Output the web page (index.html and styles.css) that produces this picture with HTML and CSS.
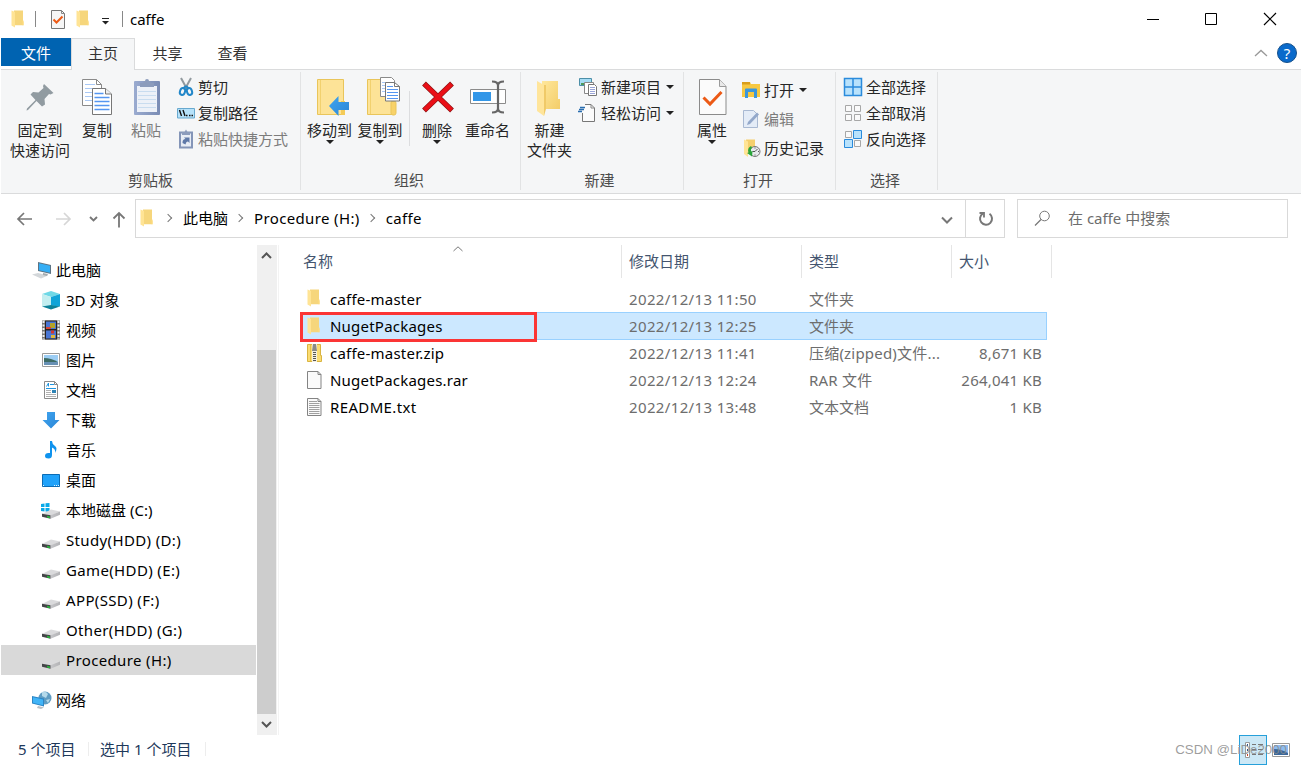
FILE: index.html
```html
<!DOCTYPE html>
<html lang="zh-CN">
<head>
    <meta charset="UTF-8">
    <title>caffe</title>
    <link rel="stylesheet" href="styles.css">
</head>
<body>
<!-- shared icons -->
<svg class="defs" width="0" height="0">
    <defs>
        <linearGradient id="gFolder" x1="0" x2="1" y1="0" y2="1"><stop offset="0" stop-color="#ffe79b"/><stop offset="1" stop-color="#f3cd69"/></linearGradient>
        <linearGradient id="gDrive" x1="0" x2="1"><stop offset="0" stop-color="#c6c6c9"/><stop offset="1" stop-color="#b3b3b6"/></linearGradient>
        <linearGradient id="gClip" x1="0" x2="1"><stop offset="0" stop-color="#9aabd0"/><stop offset="1" stop-color="#7a8cb4"/></linearGradient>
        <linearGradient id="gBlue" x1="0" x2="1" y1="0" y2="1"><stop offset="0" stop-color="#3fa4ef"/><stop offset="1" stop-color="#2b86d6"/></linearGradient>
    </defs>
    <symbol id="folder" viewBox="0 0 14 18">
        <path d="M3 0.500h9v11h.5v3.800H3z" fill="#f6d67c"/>
        <path d="M0.500 0.500L4 2v15.500l-3.500-2z" fill="#ffe495"/>
        <path d="M11.500 10.500h1v4.800h-1z" fill="#ffdc7c"/>
    </symbol>
    <symbol id="drive" viewBox="0 0 18 10">
        <path d="M0 5L9 0.500 18 2.500 9 6.500z" fill="#dadadc"/>
        <path d="M8.500 6.300L18 2.500v3.300L8.500 9.800z" fill="url(#gDrive)"/>
        <path d="M0 4.800l8.500 1.500v3.500L0 7.800z" fill="#434547"/>
        <path d="M5 6.800l3 .6v1.800l-3-.7z" fill="#28b43c"/>
    </symbol>
    <symbol id="check" viewBox="0 0 30 38">
        <path d="M1.500 1.500h20l6.500 7v28h-26.500z" fill="#fbfbfb" stroke="#8b8b8b"/>
        <path d="M21.500 1.500v7h6.500" fill="#e9e9e9" stroke="#9b9b9b"/>
        <path d="M5.500 19.500l6.500 6.500 11.500-12" fill="none" stroke="#ec5a16" stroke-width="3"/>
    </symbol>
</svg>

<div class="window">
    <!-- title bar -->
    <div class="titlebar">
        <svg class="tb-folder" width="14" height="18"><use href="#folder"/></svg>
        <i class="tb-line"></i>
        <svg class="tb-check" width="16" height="19" viewBox="0 0 16 19"><path d="M1.500.5h10l3 3v15h-13z" fill="#f6f6f6" stroke="#777"/><path d="M11.500.5v3h3" fill="none" stroke="#888"/><path d="M3.500 9.500l3 3 6-6" fill="none" stroke="#ec5a16" stroke-width="2"/></svg>
        <svg class="tb-folder2" width="14" height="18"><use href="#folder"/></svg>
        <svg class="tb-more" width="7" height="7"><path d="M0 .5h7" stroke="#222"/><path d="M0 3h7L3.500 6.500z" fill="#222"/></svg>
        <i class="tb-line tb-line2"></i>
        <span class="tb-title">caffe</span>
        <svg class="tb-btns" width="131" height="14"><path d="M1 7.500h12" stroke="#000"/><path d="M59.500 1.500h11v11h-11z" fill="none" stroke="#000"/><path d="M118 1l12 12M130 1l-12 12" stroke="#000" stroke-width="1.200"/></svg>
    </div>

    <!-- tabs -->
    <div class="tabs">
        <div class="tab tab-file">文件</div>
        <div class="tab tab-active">主页</div>
        <div class="tab">共享</div>
        <div class="tab">查看</div>
        <svg class="tabs-up" width="14" height="8"><path d="M1 7l6-5.500L13 7" fill="none" stroke="#999" stroke-width="1.300"/></svg>
        <span class="help">?</span>
    </div>

    <!-- ribbon -->
    <div class="ribbon">
        <div class="group g-clip">
            <div class="group-body">
                <div class="big w78">
                    <svg width="40" height="40"><path d="M24 7l9.500 9-3 1.500-1.500-.5-4.500 5 .5 5.500-3 2-5.500-5.500-8.500 9-1.500.5.500-2 8.500-8.500-5-5.500 2.500-2.500 5.500.5 5-4.500-.5-2z" fill="#919ba1"/></svg>
                    <span>固定到<br>快速访问</span>
                </div>
                <div class="big w36">
                    <svg width="40" height="40" fill="none"><path d="M5.500 2.500h14l5 5v21h-19z" fill="#fff" stroke="#8a8a8a"/><path d="M19.500 2.500v5h5" stroke="#8a8a8a"/><path d="M8 7.500h10M8 11.500h14M8 15.500h10M8 19.500h10M8 23.500h10" stroke="#a9c8f5"/><path d="M15.500 11.500h13l6 5.500v20.500h-19z" fill="#fff" stroke="#777"/><path d="M28.500 11.500V17h6" fill="#eee" stroke="#777"/><path d="M17.500 16.500h9M17.500 20.500h15M17.500 24.500h15M17.500 28.500h15M17.500 32.500h15" stroke="#5596f1" stroke-width="1.300"/></svg>
                    <span>复制</span>
                </div>
                <div class="big w62 off">
                    <svg width="40" height="40"><rect x="8" y="4" width="26" height="34" rx="1" fill="url(#gClip)"/><path d="M11 9h20v26H11z" fill="#edf1f8"/><path d="M12 14.500h18M12 18.500h18M12 22.500h18M12 26.500h18M12 30.500h18" stroke="#c9dcef"/><path d="M14 6h3q1-2 2-2a2 2 0 0 1 4 0q1 0 2 2h3v4H14z" fill="#8c9cbc"/></svg>
                    <span>粘贴</span>
                </div>
                <div class="list">
                    <div class="small">
                        <svg width="18" height="20"><path d="M4 1l6 11M14 1L8 12" stroke="#929a9f" stroke-width="2"/><path d="M9 9l-3 2.500M9 9l3 2.500" stroke="#2287c9" stroke-width="2"/><ellipse cx="5.500" cy="14.500" rx="2.500" ry="3.500" fill="none" stroke="#2287c9" stroke-width="2" transform="rotate(20 5.500 14.500)"/><ellipse cx="12.500" cy="14.500" rx="2.500" ry="3.500" fill="none" stroke="#2287c9" stroke-width="2" transform="rotate(-20 12.500 14.500)"/></svg>
                        <span>剪切</span>
                    </div>
                    <div class="small">
                        <svg width="18" height="20"><path d="M.5 5.500h17v9.500H.5z" fill="#b6e2fa" stroke="#68a9cf"/><path d="M2.500 7l2 6M6 7l2 6M9 12.500h1.500M12 12.500h1.500M14.500 12.500H16" stroke="#111" stroke-width="1.400"/></svg>
                        <span>复制路径</span>
                    </div>
                    <div class="small off">
                        <svg width="18" height="20"><path d="M3 3.500h12v15H3z" fill="#e8edf5" stroke="#8495b8" stroke-width="2"/><path d="M5 3h2.500L9 .5 10.500 3H13v3H5z" fill="#8c9cbc"/><path d="M5.500 14c0-3 1-4 3-4L7 8.500h5.500V14L11 12.500c-1.500 0-2 1-2.500 3z" fill="#5f79a8"/></svg>
                        <span>粘贴快捷方式</span>
                    </div>
                </div>
            </div>
            <div class="group-name">剪贴板</div>
        </div>

        <div class="group g-org">
            <div class="group-body">
                <div class="big w51">
                    <svg width="40" height="40"><path d="M7.500 2.500h26v35h-26z" fill="#fde397" stroke="#e9c55a"/><path d="M10.500 3v34" stroke="#f2d16f"/><path d="M31 24h4v14h-4z" fill="#f4cb58"/><path d="M19 29l9.500-10v6h10.500v8h-10.500v6z" fill="url(#gBlue)"/></svg>
                    <span>移动到</span><b class="arr"></b>
                </div>
                <div class="big w50">
                    <svg width="40" height="40" fill="none"><path d="M7.500 2.500h25v35h-25z" fill="#fde397" stroke="#e9c55a"/><path d="M10.500 3v34" stroke="#f2d16f"/><rect x="31" y="24" width="5" height="14" rx="2" fill="#f8d269" stroke="#e9c55a"/><path d="M20.500.5h11l3 3v16h-14z" fill="#fff" stroke="#8a8a8a"/><path d="M22 5.500h6M22 8.500h6M22 11.500h6M22 14.500h6" stroke="#a9c8f5"/><path d="M25.500 5.500h9l5 4v14.500h-14z" fill="#fff" stroke="#777"/><path d="M34.500 5.500v4h5" stroke="#777"/><path d="M27 9.500h6M27 12.500h11M27 15.500h11M27 18.500h11M27 21.500h11" stroke="#5596f1"/></svg>
                    <span>复制到</span><b class="arr"></b>
                </div>
                <i class="mid-line"></i>
                <div class="big w54">
                    <svg width="40" height="40"><path d="M7 6.500l28 27M35 6.500l-28 27" stroke="#8e1515" stroke-width="5.500"/><path d="M7.500 7l27 26M34.500 7l-27 26" stroke="#ea0f17" stroke-width="4.200"/></svg>
                    <span>删除</span><b class="arr"></b>
                </div>
                <div class="big w47">
                    <svg width="40" height="40" fill="none"><path d="M2.500 12.500h35v14h-35z" fill="#fff" stroke="#8b8b8b"/><path d="M5 15h18v9H5z" fill="#3397e8"/><path d="M24 4.500q6 0 6 4v23q0 4-6 4M36 4.500q-6 0-6 4v23q0 4 6 4" stroke="#666" stroke-width="2.200"/></svg>
                    <span>重命名</span>
                </div>
            </div>
            <div class="group-name">组织</div>
        </div>

        <div class="group g-new">
            <div class="group-body">
                <div class="big w57">
                    <svg width="40" height="40"><path d="M12 4h16v18h2v10H12z" fill="url(#gFolder)"/><path d="M7 4l7 4v31l-7-5z" fill="#ffe59b"/><path d="M14 8v31l2-7V8z" fill="#f0ca68"/></svg>
                    <span>新建<br>文件夹</span>
                </div>
                <div class="list">
                    <div class="small">
                        <svg width="20" height="20" fill="none"><path d="M1.500 1.500h12v7h-12z" fill="#a5dcf5" stroke="#4c8fa8"/><path d="M3 6h5v2H3z" fill="#4e9a5c"/><path d="M6.500 5.500h9v11h-9z" fill="#fff" stroke="#888"/><path d="M10.500 7.500h6l2 2v9h-8z" fill="#fff" stroke="#777"/><path d="M12 10.500h5M12 12.500h5M12 14.500h5M12 16.500h5" stroke="#9aa5d8"/></svg>
                        <span>新建项目</span><b class="arr"></b>
                    </div>
                    <div class="small">
                        <svg width="20" height="20" fill="none"><path d="M4.500 1.500h9l3 3v14h-12z" fill="#fbfbfb"/><path d="M7 1.500h6l3.500 3.500v13.500h-12V10" stroke="#777"/><path d="M13 1.500V5h3.500" stroke="#888"/><path d="M2 4.500h5M1 6.500h5M0 8.500h4" stroke="#2a6eb0" stroke-width="1.300"/></svg>
                        <span>轻松访问</span><b class="arr"></b>
                    </div>
                </div>
            </div>
            <div class="group-name">新建</div>
        </div>

        <div class="group g-open">
            <div class="group-body">
                <div class="big w56">
                    <svg width="40" height="40"><use href="#check" x="6" y="1" width="30" height="38"/></svg>
                    <span>属性</span><b class="arr"></b>
                </div>
                <div class="list list-wide">
                    <div class="small">
                        <svg width="20" height="20"><path d="M1 2h8l1 2h9v13H1z" fill="#f7c841"/><path d="M1 2h8v2.500H1z" fill="#d99e1c"/><path d="M4 9.500q0-1 1-1h10q1 0 1 1V18h-3v-6H7v6H4z" fill="#3c97dc"/></svg>
                        <span>打开</span><b class="arr"></b>
                    </div>
                    <div class="small off">
                        <svg width="20" height="20"><path d="M2.500 1.500h10l4 4v13h-14z" fill="#e4ecf7" stroke="#a9b9d2"/><path d="M6 16l1-3L16 3.500l2 2L9 15z" fill="#93a8ca"/></svg>
                        <span>编辑</span>
                    </div>
                    <div class="small">
                        <svg width="20" height="20"><path d="M5 1.500h9v14H5z" fill="#f4cf6c"/><path d="M3 1.500l4 2V19l-4-3z" fill="#ffe495"/><circle cx="14" cy="13.500" r="5" fill="#e6e9ec" stroke="#777"/><path d="M14 13.500l2.500-2.500M14 13.500h-2.500M14 9.500v1M14 16.500v1M17 13.500h1" stroke="#555"/><path d="M10 8q-4 2-2.500 6.500l-1.500.5 5 3.500.5-5.500-1.500.5q-.5-3 1-4z" fill="#29a53a"/></svg>
                        <span>历史记录</span>
                    </div>
                </div>
            </div>
            <div class="group-name">打开</div>
        </div>

        <div class="group g-select">
            <div class="group-body">
                <div class="list">
                    <div class="small">
                        <svg width="20" height="20"><path d="M1.500 1.500h17v17h-17zM10 1.500v17M1.500 10h17" fill="#b8e2fc" stroke="#2a8bdc" stroke-width="1.500"/></svg>
                        <span>全部选择</span>
                    </div>
                    <div class="small">
                        <svg width="20" height="20"><path d="M2.500 2.500h6v6h-6zM11.500 2.500h6v6h-6zM2.500 11.500h6v6h-6zM11.500 11.500h6v6h-6z" fill="#fafafa" stroke="#a7a7a7"/></svg>
                        <span>全部取消</span>
                    </div>
                    <div class="small">
                        <svg width="20" height="20"><path d="M2.500 2.500h6v6h-6zM11.500 11.500h6v6h-6z" fill="#fafafa" stroke="#a7a7a7"/><path d="M10.500 1.500h8v8h-8zM1.500 10.500h8v8h-8z" fill="#b8e2fc" stroke="#2a8bdc"/></svg>
                        <span>反向选择</span>
                    </div>
                </div>
            </div>
            <div class="group-name">选择</div>
        </div>
    </div>

    <!-- address bar -->
    <div class="address">
        <svg class="nav-arrows" width="114" height="20" fill="none">
            <path d="M8 3L2 9l6 6M2 9h14" stroke="#777" stroke-width="1.700"/>
            <path d="M48 3l6 6-6 6M54 9H40" stroke="#d6d6d6" stroke-width="1.700"/>
            <path d="M74 7l3.500 3.500L81 7" stroke="#777" stroke-width="1.900"/>
            <path d="M97.500 8.500L103 3l5.500 5.500M103 3.500v14" stroke="#777" stroke-width="1.800"/>
        </svg>
        <div class="path">
            <svg class="path-folder" width="14" height="18"><use href="#folder"/></svg>
            <i class="chev"></i><span>此电脑</span>
            <i class="chev"></i><span class="lat">Procedure (H:)</span>
            <i class="chev"></i><span class="lat">caffe</span>
            <svg class="path-down" width="12" height="8"><path d="M1 1.500l5 5 5-5" fill="none" stroke="#777" stroke-width="2"/></svg>
            <div class="refresh"><svg width="16" height="16" fill="none"><path d="M11.500 2.800A6 6 0 1 1 5 2.500" stroke="#777" stroke-width="2"/><path d="M1.500 2h4.500v4.500" stroke="#777" stroke-width="1.800"/></svg></div>
        </div>
        <div class="search">
            <svg width="17" height="17" fill="none"><circle cx="10.500" cy="6" r="4.800" stroke="#777"/><path d="M7 9.500L1 15.500" stroke="#777" stroke-width="1.300"/></svg>
            <span>在 caffe 中搜索</span>
        </div>
    </div>

    <div class="main">
        <!-- navigation tree -->
        <div class="tree">
            <div class="node top">
                <svg width="20" height="20"><path d="M6 2l13 3v9L6 11z" fill="#5c7384"/><path d="M7 3.200l11 2.500v7L7 10.200z" fill="#35aef5"/><path d="M0 14.500l6-1.500 10 2.500-7 3z" fill="#d3d7da"/><path d="M11 13l5 1-1 2-4-1z" fill="#a6acb0"/></svg>
                <span>此电脑</span>
            </div>
            <div class="node">
                <svg width="20" height="20"><path d="M1 4l9-3 9 3-9 3z" fill="#6fd8e6"/><path d="M1 4l9 3v8.500l-9 1z" fill="#c3eef0"/><path d="M10 7l9-3v12.500l-9-1z" fill="#10a4d8"/><path d="M1 16.500L10 15l9 1.500-9 3z" fill="#0d8299"/></svg>
                <span>3D 对象</span>
            </div>
            <div class="node">
                <svg width="20" height="20"><path d="M1 .5h18v19H1z" fill="#777"/><path d="M4 .5h12v19H4z" fill="#28231f"/><path d="M5 1.500h10v7.500H5zM5 10.500h10v8H5z" fill="#4976d4"/><path d="M9 3h5v5H9z" fill="#b4a329"/><path d="M5 7h5v2H5z" fill="#da4437"/><path d="M10 10.500h3v3h-3z" fill="#d6362c"/><path d="M10 15h4v3h-4z" fill="#e0b73a"/><path d="M2.500 1v18M17.500 1v18" stroke="#eee" stroke-width="2" stroke-dasharray="2 1.500"/></svg>
                <span>视频</span>
            </div>
            <div class="node">
                <svg width="20" height="20"><path d="M1.500 3.500h17v13h-17z" fill="#fff" stroke="#9b9b9b"/><path d="M3 5h14v10H3z" fill="#9ccdf4"/><path d="M3 8q7 0 14 4v1H3z" fill="#3d6b64"/><path d="M3 12h14v3H3z" fill="#6790b4"/></svg>
                <span>图片</span>
            </div>
            <div class="node">
                <svg width="20" height="20" fill="none"><path d="M3.500 1.500h10l3 3v14h-13z" fill="#fff" stroke="#8a8a8a"/><path d="M13.500 1.500v3h3" stroke="#8a8a8a"/><path d="M5.500 6.500L7.500 3v3.500M9 4.500h4M5 8.500h10" stroke="#1e95e0"/><path d="M5 10.500h5M5 12.500h5M5 14.500h10M5 16.500h10" stroke="#b0b0b0"/><path d="M11 10h4v3h-4z" fill="#2e83b5"/></svg>
                <span>文档</span>
            </div>
            <div class="node">
                <svg width="20" height="20"><path d="M6 2h8v8h4.500L10 18.500 1.500 10H6z" fill="url(#gBlue)"/></svg>
                <span>下载</span>
            </div>
            <div class="node">
                <svg width="20" height="20"><path d="M9 1h2q0 3 3 5t0 7q1-4-3-5.500V15q0 3.500-3.500 3.500T4 16q0-3 3.500-3H9z" fill="#0f93ee"/></svg>
                <span>音乐</span>
            </div>
            <div class="node">
                <svg width="20" height="20"><path d="M1.500 4.500h17v12h-17z" fill="#20a2fa" stroke="#0b6cb5"/><path d="M2 15.500h2M13 15.500h5" stroke="#e5f4ff" stroke-dasharray="1 1"/></svg>
                <span>桌面</span>
            </div>
            <div class="node">
                <svg width="20" height="20"><path d="M0 4l3.500-.5V7H0zM4.500 3.300L8.500 3v4h-4zM0 8h3.500v3.500L0 11zM4.500 8h4v4l-4-.5z" fill="#08a9e8"/><use href="#drive" x="1" y="9" width="18" height="10"/></svg>
                <span>本地磁盘 (C:)</span>
            </div>
            <div class="node"><svg width="20" height="20"><use href="#drive" x="1" y="9" width="18" height="10"/></svg><span class="lat">Study(HDD) (D:)</span></div>
            <div class="node"><svg width="20" height="20"><use href="#drive" x="1" y="9" width="18" height="10"/></svg><span class="lat">Game(HDD) (E:)</span></div>
            <div class="node"><svg width="20" height="20"><use href="#drive" x="1" y="9" width="18" height="10"/></svg><span class="lat">APP(SSD) (F:)</span></div>
            <div class="node"><svg width="20" height="20"><use href="#drive" x="1" y="9" width="18" height="10"/></svg><span class="lat">Other(HDD) (G:)</span></div>
            <div class="node current"><svg width="20" height="20"><use href="#drive" x="1" y="9" width="18" height="10"/></svg><span class="lat">Procedure (H:)</span></div>
            <div class="node top network">
                <svg width="20" height="20"><circle cx="13" cy="8" r="6.500" fill="#5f9cc2"/><path d="M10 2q4-1 6 2l-2 4-4-2zM14 10l4-1-2 4z" fill="#b4d9ea"/><path d="M0 6l12 2.500v8L0 13.500z" fill="#2c86c6"/><path d="M1 7.200l10 2.200v5.800L1 12.800z" fill="#41b4f7"/><path d="M6 16l6 1.500-3 1.500-4-1z" fill="#b9bfc4"/></svg>
                <span>网络</span>
            </div>
        </div>
        <div class="scroll">
            <svg width="20" height="20"><path d="M5 13l4.500-4.500L14 13" fill="none" stroke="#555" stroke-width="2"/></svg>
            <i class="thumb"></i>
            <svg width="20" height="20"><path d="M5 7l4.500 4.500L14 7" fill="none" stroke="#555" stroke-width="2"/></svg>
        </div>

        <!-- file list -->
        <div class="files">
            <div class="head">
                <div>名称<svg class="sort" width="10" height="6"><path d="M.5 5L5 .8 9.500 5" fill="none" stroke="#777"/></svg></div>
                <div>修改日期</div>
                <div>类型</div>
                <div>大小</div>
            </div>
            <div class="row">
                <svg width="16" height="20"><use href="#folder" x="0" y="0" width="14" height="18"/></svg>
                <span class="name">caffe-master</span><span class="lat">2022/12/13 11:50</span><span>文件夹</span><span></span>
            </div>
            <div class="row selected">
                <svg width="16" height="20"><use href="#folder" x="0" y="1" width="14" height="18"/></svg>
                <span class="name">NugetPackages</span><span class="lat">2022/12/13 12:25</span><span>文件夹</span><span></span>
                <i class="mark"></i>
            </div>
            <div class="row">
                <svg width="16" height="20"><path d="M.5 1.500h13v11h1v6H.5z" fill="#fbdc72" stroke="#d9b441"/><path d="M3.500 2v16" stroke="#e3bf4c"/><path d="M5 1h5v18H5z" fill="#f4efe0"/><path d="M7.500 9v10" stroke="#555" stroke-width="3" stroke-dasharray="1 1"/><path d="M6 1h3l1 7H5z" fill="#8a8a8a"/></svg>
                <span class="name">caffe-master.zip</span><span class="lat">2022/12/13 11:41</span><span class="type">压缩(zipped)文件...</span><span class="size">8,671 KB</span>
            </div>
            <div class="row">
                <svg width="16" height="20"><path d="M.5 1.500h10.500l3 3v14H.5z" fill="#fafafa" stroke="#848484"/><path d="M11 1.500v3h3" fill="none" stroke="#848484"/></svg>
                <span class="name">NugetPackages.rar</span><span class="lat">2022/12/13 12:24</span><span class="type">RAR 文件</span><span class="size">264,041 KB</span>
            </div>
            <div class="row">
                <svg width="16" height="20"><path d="M.5 1.500h10.500l3 3v14H.5z" fill="#fafafa" stroke="#848484"/><path d="M11 1.500v3h3" fill="none" stroke="#848484"/><path d="M2 4.500h8M2 6.500h10.500M2 8.500h10.500M2 10.500h10.500M2 12.500h10.500M2 14.500h10.500M2 16.500h10.500" stroke="#a0a0a0"/></svg>
                <span class="name lat">README.txt</span><span class="lat">2022/12/13 13:48</span><span>文本文档</span><span class="size">1 KB</span>
            </div>
        </div>
    </div>

    <!-- status bar -->
    <div class="status">
        <span class="count">5 个项目</span>
        <span class="picked">选中 1 个项目</span>
        <div class="views">
            <span class="view-on"><svg width="20" height="18" fill="none"><path d="M1.500 1.500h4v15h-4z" fill="#fff" stroke="#999"/><path d="M3 4h1M3 9h1" stroke="#258" stroke-width="2"/><path d="M3 14h1" stroke="#c42" stroke-width="2"/><path d="M8 3.500h4M14 3.500h5M8 8.500h4M14 8.500h5M8 13.500h4M14 13.500h5" stroke="#777"/></svg></span>
            <svg class="view-pic" width="18" height="14"><path d="M.5.500h17v13H.5z" fill="#fff" stroke="#999"/><path d="M2 2h14v10H2z" fill="#8cbdf1"/><path d="M2 6q7 0 14 4v2H2z" fill="#3a679a"/></svg>
        </div>
        <span class="watermark">CSDN @LiDe2000</span>
    </div>
</div>
</body>
</html>
```
FILE: styles.css
```css
*{
    box-sizing: border-box;
}
body{
    margin: 0;
    background: #fff;
    font: 15px/20px "Noto Sans", "Noto Sans CJK SC", sans-serif;
    color: #000;
    overflow: hidden;
}
svg{
    display: block;
    flex: none;
}
.defs{
    position: absolute;
}
.lat{
    letter-spacing: 0.36px;
}
.window{
    width: 1301px;
    height: 765px;
    padding-left: 1px;
    display: flex;
    flex-direction: column;
}

/* title bar */
.titlebar{
    height: 38px;
    display: flex;
    align-items: center;
    padding-left: 10px;
    flex: none;
}
.tb-line{
    width: 1px;
    height: 16px;
    margin-left: 10px;
    background: #888;
}
.tb-check{
    margin-left: 14px;
}
.tb-folder2{
    margin-left: 10px;
}
.tb-more{
    margin: 4px 0 0 12px;
}
.tb-line2{
    margin-left: 13px;
}
.tb-title{
    margin-left: 7px;
}
.tb-btns{
    margin-left: auto;
    margin-right: 24px;
}

/* tabs */
.tabs{
    height: 32px;
    display: flex;
    flex: none;
    border-bottom: 1px solid #dadbdc;
    color: #333;
}
.tab{
    width: 65px;
    line-height: 30px;
    text-align: center;
}
.tab-file{
    width: 70px;
    height: 28px;
    background: #0063b1;
    color: #fff;
}
.tab-active{
    width: 64px;
    height: 32px;
    border: 1px solid #dadbdc;
    border-bottom: 0;
    line-height: 28px;
    background: #f5f6f7;
}
.tabs-up{
    margin: 11px 9px 0 auto;
}
.help{
    width: 20px;
    height: 20px;
    margin: 5px 4px 0 0;
    border: 1px solid #16518c;
    border-radius: 50%;
    background: #0a6acb;
    color: #fff;
    line-height: 18px;
    text-align: center;
}

/* ribbon */
.ribbon{
    height: 124px;
    display: flex;
    flex: none;
    background: #f5f6f7;
    border-bottom: 1px solid #dadbdc;
    color: #262626;
}
.group{
    height: 118px;
    margin-top: 2px;
    border-right: 1px solid #e2e3e4;
    display: flex;
    flex-direction: column;
}
.g-clip{
    width: 300px;
}
.g-org{
    width: 220px;
}
.g-new{
    width: 163px;
}
.g-open{
    width: 152px;
}
.g-select{
    width: 102px;
}
.group-body{
    height: 98px;
    display: flex;
}
.g-org .group-body{
    padding-left: 3px;
}
.g-select .group-body{
    padding-left: 7px;
}
.group-name{
    color: #4c4c4c;
    text-align: center;
}
.g-org .group-name,
.g-open .group-name,
.g-select .group-name{
    padding-right: 3px;
}
.g-new .group-name{
    padding-right: 5px;
}
.big{
    display: flex;
    flex-direction: column;
    align-items: center;
    padding-top: 5px;
    text-align: center;
    white-space: nowrap;
}
.big span{
    margin-top: 3px;
}
.w78{ width: 78px; }
.w36{ width: 36px; }
.w62{ width: 62px; }
.w51{ width: 51px; }
.w50{ width: 50px; }
.w54{ width: 54px; }
.w47{ width: 47px; }
.w57{ width: 57px; }
.w56{ width: 56px; }
.arr{
    width: 0;
    border: 4px solid transparent;
    border-top-color: #222;
    border-bottom: 0;
}
.mid-line{
    width: 1px;
    height: 55px;
    margin: 19px 0 0 4px;
    background: #dcdddf;
}
.off{
    color: #7c7c7c;
}
.list{
    padding-top: 2px;
}
.list-wide{
    padding: 3px 0 0 1px;
}
.small{
    height: 26px;
    display: flex;
    align-items: center;
    white-space: nowrap;
}
.list-wide .small{
    height: 29px;
}
.small span{
    margin-left: 3px;
}
.small .arr{
    margin-left: 5px;
}

/* address bar */
.address{
    display: flex;
    flex: none;
    margin-top: 5px;
    height: 39px;
}
.nav-arrows{
    margin: 11px 5px 0 15px;
}
.path{
    width: 870px;
    display: flex;
    align-items: center;
    border: 1px solid #d9d9d9;
    padding-left: 5px;
}
.path span{
    margin-top: -2px;
}
.chev{
    width: 6px;
    height: 6px;
    border: solid #777;
    border-width: 1.5px 1.5px 0 0;
    transform: rotate(45deg);
    margin: -2px 12px 0 8px;
}
.path-folder{
    margin: -1px 3px 0 -1px;
}
.path-down{
    margin: 2px 12px 0 auto;
}
.refresh{
    width: 39px;
    height: 37px;
    border-left: 1px solid #d9d9d9;
    padding-left: 2px;
    display: flex;
    align-items: center;
    justify-content: center;
}
.search{
    width: 271px;
    margin-left: 12px;
    border: 1px solid #d9d9d9;
    display: flex;
    align-items: center;
    padding-left: 16px;
    color: #6d6d6d;
}
.search span{
    margin: -2px 0 0 17px;
}

/* tree */
.main{
    display: flex;
    flex: none;
    height: 490px;
    margin-top: 7px;
}
.tree{
    width: 256px;
    padding-top: 10px;
}
.node{
    height: 30px;
    width: 255px;
    display: flex;
    align-items: center;
    padding-left: 40px;
}
.node span{
    margin-left: 5px;
}
.node.top{
    padding-left: 31px;
}
.node.top span{
    margin-left: 4px;
}
.current{
    background: #d9d9d9;
}
.network{
    margin-top: 10px;
}
.scroll{
    width: 20px;
    background: #f0f0f0;
    display: flex;
    flex-direction: column;
    justify-content: space-between;
}
.thumb{
    width: 19px;
    height: 364px;
    margin-top: 84px;
    background: #cdcdcd;
}

/* file list */
.files{
    margin-left: 1px;
    padding-left: 21px;
    border-left: 1px solid #f3f3f3;
}
.head{
    display: grid;
    grid-template-columns: 322px 180px 150px 100px;
    height: 33px;
    color: #44556f;
}
.head div{
    position: relative;
    border-right: 1px solid #e5e5e5;
    padding: 6px 0 0 7px;
}
.head div:first-child{
    padding-left: 3px;
}
.sort{
    position: absolute;
    left: 153px;
    top: 1px;
}
.row{
    position: relative;
    display: grid;
    grid-template-columns: 23px 299px 180px 150px 84px;
    align-items: center;
    width: 747px;
    height: 27px;
    padding-left: 7px;
    color: #6d6d6d;
}
.head + .row{
    margin-top: 7px;
}
.row .name{
    color: #000;
    letter-spacing: 0.22px;
}
.row .name.lat{
    letter-spacing: 0.36px;
}
.row .type{
    letter-spacing: 0.2px;
}
.row .size{
    text-align: right;
    padding-right: 1px;
    letter-spacing: 0.22px;
}
.selected{
    height: 28px;
    margin-bottom: -1px;
    padding-left: 6px;
    background: #cce8ff;
    border: 1px solid #99d1ff;
}
/* red frame round the picked name */
.mark{
    position: absolute;
    left: -1px;
    top: -1px;
    width: 237px;
    height: 30px;
    border: 3px solid #fb3535;
}

/* status bar */
.status{
    position: relative;
    height: 30px;
    display: flex;
    color: #1e395b;
    line-height: 28px;
}
.count{
    width: 88px;
    padding-left: 17px;
}
.picked{
    width: 117px;
    padding-left: 11px;
}
.count,
.picked{
    height: 14px;
    margin-top: 7px;
    border-right: 1px solid #ededed;
    line-height: 14px;
}
.views{
    display: flex;
    margin-left: auto;
    margin-right: 11px;
    align-items: center;
}
.view-on{
    width: 28px;
    height: 30px;
    padding: 5px 4px;
    background: #cce8f6;
    border: 1px solid #26a0da;
}
.view-pic{
    margin-left: 5px;
}
.watermark{
    position: absolute;
    right: 14px;
    top: 1px;
    color: rgba(140,140,140,0.85);
    font: 13.3px/28px "Liberation Sans", sans-serif;
}
```
